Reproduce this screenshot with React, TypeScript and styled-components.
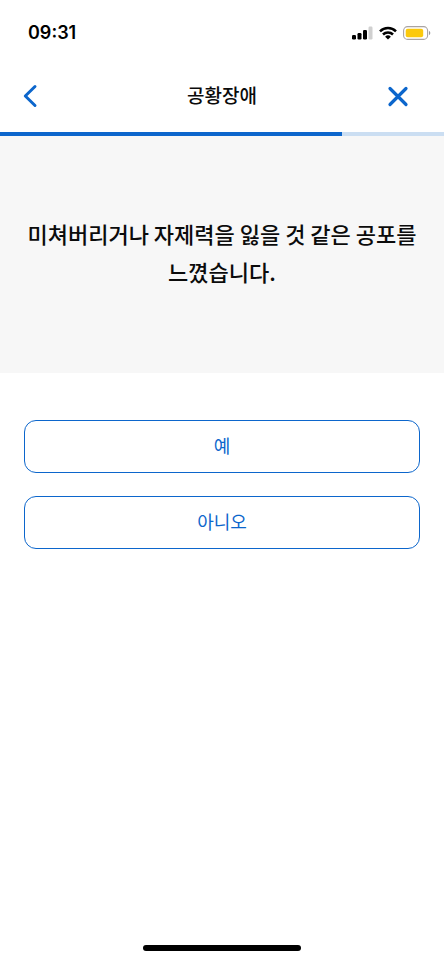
import React, { useState } from 'react';
import styled, { createGlobalStyle } from 'styled-components';

const BLUE = '#0c66cc';

const GlobalStyle = createGlobalStyle`
  *, *::before, *::after { box-sizing: border-box; }
  body {
    margin: 0;
    background: #fff;
    color: #0b0b0b;
    font-family: "Noto Sans CJK KR", sans-serif;
  }
`;

const Screen = styled.div`
  display: flex;
  flex-direction: column;
  min-height: 100vh;
`;

const StatusBar = styled.div`
  display: flex;
  align-items: center;
  justify-content: space-between;
  height: 60px;
  padding: 6px 13px 0 28px;
`;

const Clock = styled.time`
  font: 600 18px/24px Inter, sans-serif;
  color: #000;
`;

const StatusIcons = styled.div`
  display: flex;
  align-items: center;
  gap: 6px;

  svg { display: block; }
`;

const Header = styled.header`
  display: grid;
  grid-template-columns: 76px 1fr 76px;
  align-items: center;
  height: 72px;
  padding: 0 8px;
`;

const Title = styled.h1`
  margin: 0;
  padding-bottom: 2px;
  font-size: 19px;
  line-height: 28px;
  font-weight: 500;
  text-align: center;
`;

const IconButton = styled.button<{ $centered?: boolean }>`
  display: flex;
  align-items: center;
  justify-content: center;
  justify-self: ${({ $centered }) => ($centered ? 'center' : 'start')};
  width: 44px;
  height: 44px;
  padding: 0;
  border: 0;
  background: none;
  color: ${BLUE};
  cursor: pointer;
`;

const Progress = styled.div`
  height: 4px;
  background: #cbdef2;
`;

const ProgressFill = styled.div`
  height: 100%;
  background: ${BLUE};
`;

const QuestionPanel = styled.section`
  display: flex;
  align-items: center;
  justify-content: center;
  min-height: 237px;
  padding: 24px 24px 30px;
  background: #f7f7f7;
`;

const Question = styled.h2`
  margin: 0;
  font-size: 22px;
  line-height: 38px;
  font-weight: 500;
  text-align: center;
  word-break: keep-all;
`;

const Answers = styled.main`
  display: flex;
  flex: 1;
  flex-direction: column;
  gap: 23px;
  padding: 47px 24px 24px;
`;

const AnswerButton = styled.button`
  height: 53px;
  padding: 0 16px 3px;
  border: 1px solid ${BLUE};
  border-radius: 12px;
  background: #fff;
  color: ${BLUE};
  font-family: inherit;
  font-size: 18px;
  line-height: 26px;
  font-weight: 400;
  cursor: pointer;

  &[aria-pressed='true'] { background: #e8f1fb; }
`;

const HomeIndicator = styled.div`
  align-self: center;
  width: 158px;
  height: 6px;
  margin-bottom: 10px;
  border-radius: 3px;
  background: #000;
`;

const SignalIcon = () => (
  <svg width="21" height="14" viewBox="0 0 21 14" aria-hidden="true">
    <rect x="0" y="9" width="4" height="4.5" rx="1.2" />
    <rect x="5.5" y="7" width="4" height="6.5" rx="1.2" />
    <rect x="11" y="4" width="4" height="9.5" rx="1.2" />
    <rect x="16.5" y="0.5" width="4" height="13" rx="1.2" fill="#d0d0d0" />
  </svg>
);

const WifiIcon = () => (
  <svg width="18" height="14" viewBox="0 0 18 14" aria-hidden="true">
    <g fill="none" stroke="#000" strokeWidth="2.5">
      <path d="M1 5.3a11.4 11.4 0 0 1 16 0" />
      <path d="M4 8.5a7.1 7.1 0 0 1 10 0" />
    </g>
    <path d="M9 13.6 6.1 10.7a4.1 4.1 0 0 1 5.8 0z" />
  </svg>
);

const BatteryIcon = () => (
  <svg width="28" height="14" viewBox="0 0 28 14" aria-hidden="true">
    <rect x="0.6" y="0.6" width="24" height="12.8" rx="4" fill="#fff" stroke="#aaa4a2" strokeWidth="1.1" />
    <rect x="2.7" y="2.7" width="17.5" height="8.6" rx="2" fill="#fbc90c" />
    <path d="M26 5c1.7.5 1.7 3.500 0 4z" fill="#999" />
  </svg>
);

const BackIcon = () => (
  <svg width="24" height="24" viewBox="0 0 24 24" aria-hidden="true">
    <path d="M17 2.500 7.300 12 17 21.500" fill="none" stroke="currentColor" strokeWidth="3" strokeLinecap="round" strokeLinejoin="round" />
  </svg>
);

const CloseIcon = () => (
  <svg width="24" height="24" viewBox="0 0 24 24" aria-hidden="true">
    <path d="m4 4.500 16 16M20 4.500 4 20.500" fill="none" stroke="currentColor" strokeWidth="3.200" strokeLinecap="round" />
  </svg>
);

const answers = ['예', '아니오'];
const progress = 77;

export default function App() {
  const [selected, setSelected] = useState<string | null>(null);

  return (
    <Screen>
      <GlobalStyle />
      <StatusBar>
        <Clock>09:31</Clock>
        <StatusIcons>
          <SignalIcon />
          <WifiIcon />
          <BatteryIcon />
        </StatusIcons>
      </StatusBar>
      <Header>
        <IconButton type="button" aria-label="뒤로">
          <BackIcon />
        </IconButton>
        <Title>공황장애</Title>
        <IconButton type="button" aria-label="닫기" $centered>
          <CloseIcon />
        </IconButton>
      </Header>
      <Progress role="progressbar" aria-label="진행률" aria-valuenow={progress} aria-valuemin={0} aria-valuemax={100}>
        <ProgressFill style={{ width: `${progress}%` }} />
      </Progress>
      <QuestionPanel>
        <Question>미쳐버리거나 자제력을 잃을 것 같은 공포를 느꼈습니다.</Question>
      </QuestionPanel>
      <Answers>
        {answers.map((answer) => (
          <AnswerButton
            key={answer}
            type="button"
            aria-pressed={selected === answer}
            onClick={() => setSelected(answer)}
          >
            {answer}
          </AnswerButton>
        ))}
      </Answers>
      <HomeIndicator />
    </Screen>
  );
}
